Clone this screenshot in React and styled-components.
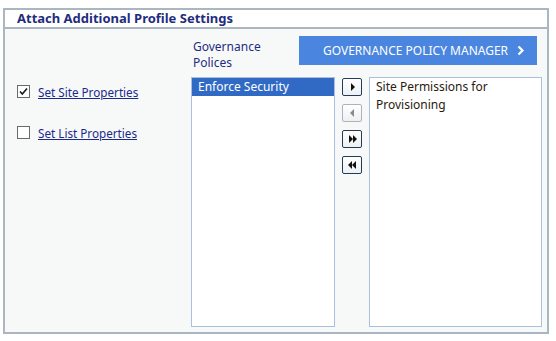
import React from 'react'
import styled, { createGlobalStyle } from 'styled-components'

const GlobalStyle = createGlobalStyle`
  body {
    margin: 0;
    background: #ffffff;
    font-family: "Noto Sans", "Open Sans", sans-serif;
  }
`

const Panel = styled.div`
  box-sizing: border-box;
  margin: 8px 0 0 3px;
  width: 546px;
  height: 326px;
  border: 2px solid #aab6c2;
  background: #f7f9f9;
  display: flex;
  flex-direction: column;
`
const Header = styled.div`
  height: 17px;
  background: #ffffff;
  border-bottom: 2px solid #aab6c2;
  padding-left: 12px;
  font-size: 13px;
  font-weight: 700;
  line-height: 17px;
  color: #1f2d80;
`
const Body = styled.div`
  flex: 1;
  display: flex;
  padding: 0 4px 5px 0;
`
const LeftCol = styled.div`
  width: 186px;
  padding: 56px 0 0 12px;
  box-sizing: border-box;
  display: flex;
  flex-direction: column;
  gap: 28px;
`
const CheckRow = styled.label`
  display: flex;
  align-items: center;
  gap: 8px;
  height: 13px;
`
const Box = styled.span`
  box-sizing: border-box;
  width: 13px;
  height: 13px;
  border: 1px solid #6a6a6a;
  background: #ffffff;
  display: flex;
  align-items: center;
  justify-content: center;
`
const Link = styled.a`
  font-size: 11.7px;
  color: #1a2a8c;
  text-decoration: underline;
  cursor: pointer;
`
const RightArea = styled.div`
  flex: 1;
  display: flex;
  flex-direction: column;
  padding-top: 7px;
`
const TopRow = styled.div`
  display: flex;
  align-items: flex-start;
  margin-bottom: 6px;
`
const Label = styled.div`
  width: 106px;
  padding: 3px 0 0 2px;
  font-size: 12px;
  line-height: 16px;
  color: #1f2d80;
`
const ManagerButton = styled.button`
  width: 238px;
  height: 29px;
  border: none;
  background: #4a86e0;
  color: #ffffff;
  font-family: inherit;
  font-size: 12px;
  display: flex;
  align-items: center;
  padding: 0 0 0 24px;
  gap: 9px;
  cursor: pointer;
`
const ListsRow = styled.div`
  flex: 1;
  display: flex;
  gap: 7px;
`
const ListBox = styled.div`
  box-sizing: border-box;
  width: ${p => p.$w}px;
  height: 250px;
  border: 1px solid #a9c1df;
  background: #ffffff;
  font-size: 12px;
  line-height: 18px;
  color: #222222;
`
const Item = styled.div`
  padding: 0 6px;
  background: ${p => (p.$selected ? '#316ac5' : 'transparent')};
  color: ${p => (p.$selected ? '#ffffff' : '#2a1a10')};
`
const MoveCol = styled.div`
  width: 20px;
  padding-top: 1px;
  display: flex;
  flex-direction: column;
  gap: 8px;
`
const MoveButton = styled.button`
  box-sizing: border-box;
  width: 20px;
  height: 18px;
  padding: 0;
  border: 1px solid ${p => (p.disabled ? '#a8b4c0' : '#243a58')};
  border-radius: 2px;
  background: linear-gradient(#ffffff, #eef0f2);
  display: flex;
  align-items: center;
  justify-content: center;
  cursor: pointer;
`

const Check = () => (
  <svg width="11" height="11" viewBox="0 0 11 11">
    <path d="M2 5.5 L4.3 8 L9 2.5" fill="none" stroke="#1a1a1a" strokeWidth="1.6" />
  </svg>
)

const Chevron = () => (
  <svg width="8" height="11" viewBox="0 0 8 11">
    <path d="M1.5 1.5 L5.5 5.5 L1.5 9.5" fill="none" stroke="#ffffff" strokeWidth="2.2" />
  </svg>
)

const Arrows = ({ dir, count, color }) => (
  <svg width={count * 4 + 1} height="8" viewBox={`0 0 ${count * 4 + 1} 8`}>
    {Array.from({ length: count }).map((_, i) =>
      dir === 'right' ? (
        <path key={i} d={`M${i * 4 + 1} 0 L${i * 4 + 5} 4 L${i * 4 + 1} 8 Z`} fill={color} />
      ) : (
        <path key={i} d={`M${i * 4 + 4} 0 L${i * 4} 4 L${i * 4 + 4} 8 Z`} fill={color} />
      )
    )}
  </svg>
)

const App = () => {
  return (
    <>
      <GlobalStyle />
      <Panel>
        <Header>Attach Additional Profile Settings</Header>
        <Body>
          <LeftCol>
            <CheckRow>
              <Box><Check /></Box>
              <Link>Set Site Properties</Link>
            </CheckRow>
            <CheckRow>
              <Box />
              <Link>Set List Properties</Link>
            </CheckRow>
          </LeftCol>
          <RightArea>
            <TopRow>
              <Label>Governance<br />Polices</Label>
              <ManagerButton>
                GOVERNANCE POLICY MANAGER <Chevron />
              </ManagerButton>
            </TopRow>
            <ListsRow>
              <ListBox $w={144}>
                <Item $selected>Enforce Security</Item>
              </ListBox>
              <MoveCol>
                <MoveButton><Arrows dir="right" count={1} color="#111" /></MoveButton>
                <MoveButton disabled><Arrows dir="left" count={1} color="#8a8a8a" /></MoveButton>
                <MoveButton><Arrows dir="right" count={2} color="#111" /></MoveButton>
                <MoveButton><Arrows dir="left" count={2} color="#111" /></MoveButton>
              </MoveCol>
              <ListBox $w={173}>
                <Item>Site Permissions for Provisioning</Item>
              </ListBox>
            </ListsRow>
          </RightArea>
        </Body>
      </Panel>
    </>
  )
}

export default App
